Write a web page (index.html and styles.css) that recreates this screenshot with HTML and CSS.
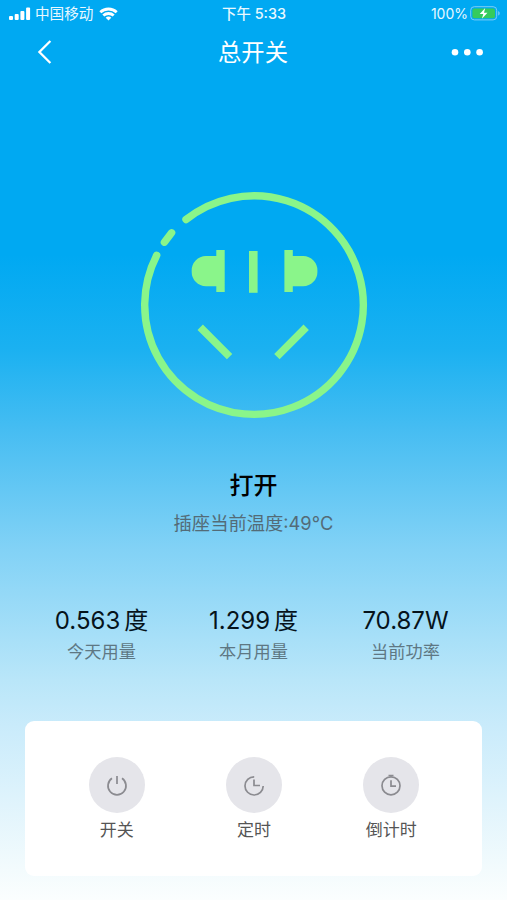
FILE: index.html
```html
<!DOCTYPE html>
<html lang="zh-CN">
<head>
<meta charset="utf-8">
<meta name="viewport" content="width=device-width, initial-scale=1">
<title>总开关</title>
<link rel="stylesheet" href="styles.css">
</head>
<body>
<div class="screen">
  <div class="status">
    <div class="carrier">
      <svg width="22" height="14" viewBox="0 0 22 14" fill="#fff"><rect x="0" y="9" width="4" height="4" rx="1"/><rect x="5.7" y="7" width="4" height="6" rx="1"/><rect x="11.4" y="4" width="4" height="9" rx="1"/><rect x="17.1" y="0.5" width="4" height="12.5" rx="1"/></svg>
      <span>中国移动</span>
      <svg class="wifi" width="19" height="14" viewBox="0 0 19 14" fill="none" stroke="#fff" stroke-width="2.8"><path d="M1.3 5.3a11.8 11.8 0 0 1 16.4 0M4.3 8.6a7.5 7.5 0 0 1 10.4 0"/><path d="M9.5 13.4 6.7 10.8a3.9 3.9 0 0 1 5.6 0z" fill="#fff" stroke="none"/></svg>
    </div>
    <div class="time">下午 5:33</div>
    <div class="power">
      <span>100%</span>
      <svg width="31" height="15" viewBox="0 0 31 15"><rect x=".7" y=".7" width="26" height="13.2" rx="3.6" fill="none" stroke="#7ccdf5"/><rect x="2.4" y="2.4" width="22.6" height="9.8" rx="2" fill="#35cb5c"/><path d="M28.2 5v4.6c2-.8 2-3.8 0-4.6z" fill="#7ccdf5"/><path d="M15.2 2 9.7 8.1h3.6L11.9 12.8 17.5 6.7H14z" fill="#fff"/></svg>
    </div>
  </div>
  <header class="nav">
    <svg width="16" height="26" viewBox="0 0 16 26" fill="none" stroke="#fff" stroke-width="2.3"><path d="M14.4 2 3.4 13l11 11"/></svg>
    <h1>总开关</h1>
    <svg width="34" height="8" viewBox="0 0 34 8" fill="#fff"><circle cx="4" cy="4.300" r="3.3"/><circle cx="16.3" cy="4.300" r="3.3"/><circle cx="28.6" cy="4.300" r="3.3"/></svg>
  </header>
  <main>
    <svg class="socket" width="228" height="228" viewBox="140 191 228 228">
      <g fill="none" stroke="#8af58a" stroke-width="7.4" stroke-linecap="round"><path d="M186 219.5A109.3 109.3 0 1 1 156.7 255.3"/><path d="M171.6 232.8 164.4 242.2"/></g>
      <g fill="#8af58a"><path d="M216.3 250h8.4v42h-8.4v-5.7H206a14.5 14.5 0 0 1-14.3-15.1A14.5 14.5 0 0 1 206 256h10.3z"/><path d="M249 251h8.6v41.8H249z"/><path d="M292.8 250h-8.4v42h8.4v-5.7h10.3a14.5 14.5 0 0 0 14.3-15.1A14.5 14.5 0 0 0 303.1 256h-10.3z"/></g>
      <g stroke="#8af58a" stroke-width="7.6"><path d="M200.2 327.3 229.6 356.6M306.2 327.3 276.9 356.6"/></g>
    </svg>
    <h2>打开</h2>
    <p class="temp">插座当前温度:49°C</p>
    <section class="stats">
      <div><strong>0.563<span>度</span></strong><small>今天用量</small></div>
      <div><strong>1.299<span>度</span></strong><small>本月用量</small></div>
      <div><strong>70.87W</strong><small>当前功率</small></div>
    </section>
    <section class="actions">
      <div class="action"><i><svg width="24" height="24" viewBox="0 0 24 24"><path d="M7 5.3a9 9 0 1 0 10 0M12 3v8"/></svg></i><span>开关</span></div>
      <div class="action"><i><svg width="24" height="24" viewBox="0 0 24 24"><path d="M12.2 3.800a9.100 9.100 0 1 0 9 9.200M12 6.400v6.100h6"/></svg></i><span>定时</span></div>
      <div class="action"><i><svg width="24" height="24" viewBox="0 0 24 24"><circle cx="12" cy="12.8" r="9"/><path d="M9.5 2.500h5M12 7.200v6h5"/></svg></i><span>倒计时</span></div>
    </section>
  </main>
</div>
</body>
</html>
```
FILE: styles.css
```css
* { box-sizing: border-box; }
body { margin: 0; font-family: Inter, "Noto Sans CJK SC", sans-serif; }
h1, h2, p { margin: 0; font-weight: 400; }
svg { display: block; flex: none; }

.screen {
  width: 507px;
  height: 900px;
  overflow: hidden;
  background: linear-gradient(#00a9f2 0, #00a9f2 255px, #1bb1f1 350px, #46bdf2 430px, #82d2f6 550px, #b9e6f9 680px, #c9ebfb 725px, #f3fbfd 870px, #fbfefe 900px);
}

.status {
  display: grid;
  grid-template-columns: 1fr auto 1fr;
  align-items: center;
  height: 28px;
  padding: 0 6px 0 9px;
  color: #e8f8ff;
  font-size: 14.6px;
  line-height: 28px;
}
.carrier, .power { display: flex; align-items: center; }
.carrier { gap: 4px; }
.carrier span { margin-right: 2px; }
.carrier svg { margin-top: -1px; }
.power { justify-content: flex-end; gap: 2px; font-size: 14px; }
.power svg { margin-top: -1px; }
.time { margin-right: 2px; font-weight: 500; font-size: 14.4px; }

.nav {
  display: flex;
  align-items: center;
  justify-content: space-between;
  height: 48px;
  padding: 0 22px 0 36px;
  color: #fff;
}
.nav h1 { margin-left: 3px; padding-top: 2px; font-size: 23.3px; line-height: 46px; }

main { display: flex; flex-direction: column; align-items: center; }
.socket { margin-top: 115px; }
h2 { margin-top: 49px; font-size: 24px; font-weight: 500; line-height: 36px; }
.temp { margin-top: 6px; font-size: 18.3px; line-height: 26px; color: #536b77; }

.stats {
  display: grid;
  grid-template-columns: repeat(3, 152px);
  margin-top: 68px;
  text-align: center;
}
.stats strong { display: block; font-size: 24px; font-weight: 400; line-height: 34px; color: #06131b; }
.stats strong span { margin-left: 4px; }
.stats small { display: block; margin-top: 1px; font-size: 17.2px; line-height: 26px; color: #5e7783; }

.actions {
  display: grid;
  grid-template-columns: repeat(3, 137.3px);
  justify-content: center;
  width: 457px;
  height: 155px;
  margin-top: 56px;
  padding-top: 36px;
  padding-left: 1px;
  border-radius: 9px;
  background: #fff;
}
.action { display: flex; flex-direction: column; align-items: center; }
.action i {
  display: grid;
  place-items: center;
  width: 56px;
  height: 56px;
  border-radius: 50%;
  background: #e5e5ea;
}
.action svg { fill: none; stroke: #8b8b90; stroke-width: 1.7; }
.action span { margin-top: 4px; font-size: 17px; line-height: 26px; color: #555; }
```
